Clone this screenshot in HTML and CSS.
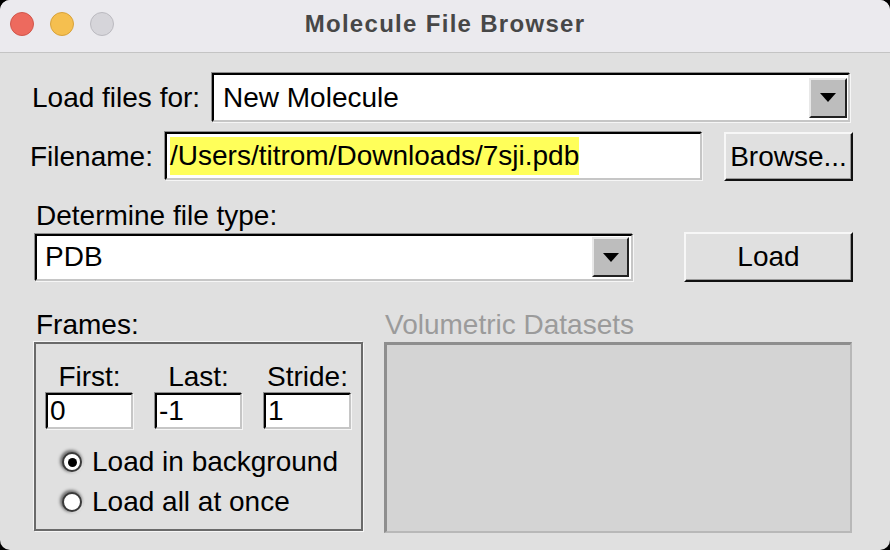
FILE: index.html
```html
<!DOCTYPE html>
<html>
<head>
<meta charset="utf-8">
<link rel="stylesheet" href="styles.css">
</head>
<body>
<div class="window">
  <div class="titlebar">
    <div class="lights">
      <span class="light red"></span>
      <span class="light yellow"></span>
      <span class="light gray"></span>
    </div>
    <div class="title">Molecule File Browser</div>
  </div>
  <div class="content">
    <div class="row row1">
      <div class="label">Load files for:</div>
      <div class="combo combo1">
        <span class="val">New Molecule</span>
        <span class="arrow"><span class="tri"></span></span>
      </div>
    </div>
    <div class="row row2">
      <div class="label">Filename:</div>
      <div class="entry fname"><span class="sel">/Users/titrom/Downloads/7sji.pdb</span></div>
      <div class="btn browse">Browse...</div>
    </div>
    <div class="label label3">Determine file type:</div>
    <div class="row row3">
      <div class="combo combo3">
        <span class="val">PDB</span>
        <span class="arrow arrow3"><span class="tri"></span></span>
      </div>
      <div class="btn load">Load</div>
    </div>
    <div class="bottom">
      <div class="col">
        <div class="label group-label frames-label">Frames:</div>
        <div class="frames">
          <div class="frame-grid">
            <div class="flabel">First:</div>
            <div class="flabel">Last:</div>
            <div class="flabel">Stride:</div>
            <div class="entry small">0</div>
            <div class="entry small">-1</div>
            <div class="entry small">1</div>
          </div>
          <div class="radios">
            <div class="radio-row"><span class="radio on"></span><span>Load in background</span></div>
            <div class="radio-row"><span class="radio"></span><span>Load all at once</span></div>
          </div>
        </div>
      </div>
      <div class="col">
        <div class="label group-label vol-label">Volumetric Datasets</div>
        <div class="volbox"></div>
      </div>
    </div>
  </div>
</div>
</body>
</html>
```
FILE: styles.css
```css
html, body {
  margin: 0;
  padding: 0;
  background: #000;
}
body {
  width: 890px;
  height: 550px;
  overflow: hidden;
  font-family: "Liberation Sans", Arial, sans-serif;
  font-size: 28px;
  color: #000;
}
.window {
  width: 890px;
  height: 550px;
  background: #e0e0e0;
  border-radius: 10px;
  overflow: hidden;
}
.titlebar {
  height: 52px;
  border-bottom: 1px solid #c4c4c4;
  background: #ebeaee;
  display: flex;
  align-items: center;
  position: relative;
}
.lights {
  position: absolute;
  left: 10px;
  top: 12px;
  display: flex;
  gap: 16px;
}
.light {
  width: 24px;
  height: 24px;
  border-radius: 50%;
  box-sizing: border-box;
  border: 1px solid;
}
.red { background: #ed6a5e; border-color: #d1564b; }
.yellow { background: #f5bf4f; border-color: #d8a23a; }
.gray { background: #d6d5da; border-color: #bbbac0; }
.title {
  width: 100%;
  text-align: center;
  font-weight: bold;
  font-size: 24px;
  letter-spacing: 1.3px;
  color: #474747;
  padding-bottom: 4px;
}
.content {
  display: flex;
  flex-direction: column;
}
.label {
  line-height: 32px;
  white-space: nowrap;
}
.row {
  display: grid;
  align-items: center;
}
.row1 {
  margin-top: 20px;
  height: 49px;
  margin-left: 32px;
  grid-template-columns: 180px 638px;
}
.row2 {
  margin-top: 10px;
  height: 49px;
  margin-left: 30px;
  grid-template-columns: 135px 537px 151px;
}
.label3 {
  margin-top: 19px;
  margin-left: 36px;
  height: 32px;
}
.row3 {
  height: 50px;
  margin-left: 35px;
  grid-template-columns: 598px 169px;
  column-gap: 51px;
}
.combo, .entry {
  box-sizing: border-box;
  background: #fff;
  border: 2px solid;
  border-color: #000 #c6c6c6 #c6c6c6 #000;
  box-shadow: -1px -1px 0 #8e8e8e, 1px 1px 0 #f6f6f6;
}
.combo {
  display: flex;
  align-items: center;
  padding-left: 9px;
}
.combo1 { height: 49px; }
.combo3 { height: 47px; padding-left: 8px; }
.combo .val { flex: 1; white-space: nowrap; }
.arrow {
  box-sizing: border-box;
  width: 38px;
  height: 40px;
  margin-right: 1px;
  background: #bdbdbd;
  border: 2px solid;
  border-color: #e8e8e8 #222 #222 #e8e8e8;
  display: flex;
  align-items: center;
  justify-content: center;
}
.arrow3 { width: 37px; margin-right: 2px; }
.tri {
  width: 0;
  height: 0;
  border-left: 8px solid transparent;
  border-right: 8px solid transparent;
  border-top: 9px solid #000;
}
.fname {
  height: 48px;
  display: flex;
  align-items: center;
  padding-left: 3px;
  align-self: start;
}
.sel {
  background: #ffff5a;
  line-height: 38px;
  white-space: nowrap;
}
.btn {
  box-sizing: border-box;
  background: #e0e0e0;
  border: 2px solid;
  border-color: #f7f7f7 #111 #111 #f7f7f7;
  box-shadow: inset -1px -1px 0 #9a9a9a;
  display: flex;
  align-items: center;
  justify-content: center;
  white-space: nowrap;
}
.browse { height: 49px; margin-left: 22px; }
.load { height: 50px; }
.bottom {
  margin-top: 27px;
  margin-left: 34px;
  display: grid;
  grid-template-columns: 329px 468px;
  column-gap: 21px;
}
.group-label {
  height: 33px;
  line-height: 32px;
}
.frames-label { padding-left: 2px; }
.vol-label { padding-left: 1px; color: #9b9b9b; }
.frames {
  box-sizing: border-box;
  height: 189px;
  border: 2px solid #6a6a6a;
  box-shadow: 1px 1px 0 #f6f6f6, -1px -1px 0 #f6f6f6;
  padding-top: 17px;
}
.frame-grid {
  display: grid;
  grid-template-columns: 87px 87px 87px;
  column-gap: 22px;
  margin-left: 10px;
}
.flabel {
  text-align: center;
  line-height: 32px;
}
.entry.small {
  height: 36px;
  line-height: 32px;
  padding-left: 2px;
}
.radios {
  margin-top: 13px;
  padding-left: 26px;
}
.radio-row {
  height: 40px;
  line-height: 40px;
  display: flex;
  align-items: center;
  gap: 10px;
}
.radio {
  width: 20px;
  height: 20px;
  box-sizing: border-box;
  border-radius: 50%;
  background: #fff;
  border: 2px solid #3a3a3a;
  box-shadow: -1px -1px 3px 1px rgba(0,0,0,0.5), 1px 1px 1px #fbfbfb;
  display: flex;
  align-items: center;
  justify-content: center;
}
.radio.on::after {
  content: "";
  width: 9px;
  height: 9px;
  border-radius: 50%;
  background: #000;
}
.volbox {
  box-sizing: border-box;
  height: 191px;
  background: #d4d4d4;
  border-style: solid;
  border-width: 3px 2px 2px 3px;
  border-color: #8e8e8e #b8b8b8 #b8b8b8 #8e8e8e;
}
```
